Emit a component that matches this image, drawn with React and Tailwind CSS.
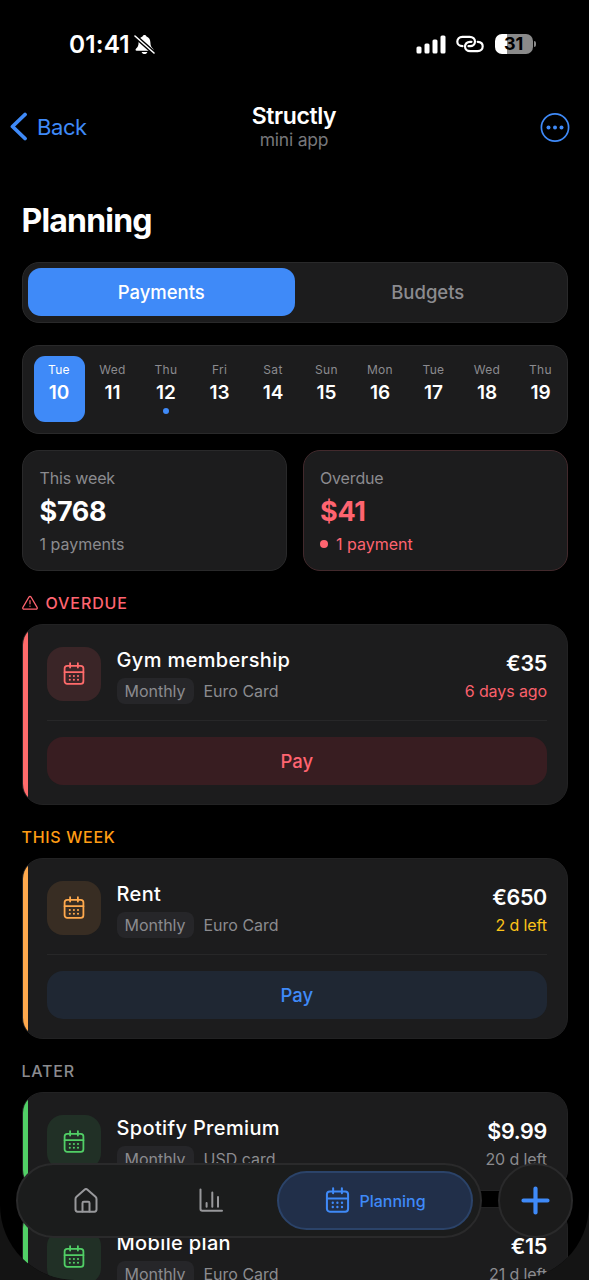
import React from "react";

const days = [
    { day: "Tue", date: 10, active: true },
    { day: "Wed", date: 11 },
    { day: "Thu", date: 12, dot: true },
    { day: "Fri", date: 13 },
    { day: "Sat", date: 14 },
    { day: "Sun", date: 15 },
    { day: "Mon", date: 16 },
    { day: "Tue", date: 17 },
    { day: "Wed", date: 18 },
    { day: "Thu", date: 19 },
];

const tones = {
    red: {
        bar: "bg-[#ff6b6b]",
        icon: "bg-[#3a2527] text-[#ff6b6b]",
        due: "text-[#f9606c]",
        pay: "bg-[#381d21] text-[#ff6470]",
    },
    orange: {
        bar: "bg-[#ffa94d]",
        icon: "bg-[#382d23] text-[#ffa94d]",
        due: "text-[#fcc419]",
        pay: "bg-[#1f2733] text-[#3f8af8]",
    },
    green: {
        bar: "bg-[#51cf66]",
        icon: "bg-[#213026] text-[#51cf66]",
        due: "text-[#8b8b8f]",
        pay: "",
    },
};

const CalendarIcon = ({ className }) => (
    <svg className={className} viewBox="0 0 24 24" fill="none" stroke="currentColor" strokeWidth="1.8" strokeLinecap="round">
        <rect x="2.6" y="3.9" width="18.8" height="18" rx="2.6" />
        <path d="M8.1 1.2v4.4M15.9 1.2v4.4M2.6 10.2h18.8" />
        <path d="M7.8 14h.01M11.9 14h.01M16 14h.01M7.8 17.8h.01M11.9 17.8h.01M16 17.8h.01" strokeWidth="2.1" />
    </svg>
);

const StatusBar = () => (
    <div className="flex h-[88px] items-center justify-between pl-[69px] pr-[53px]">
        <div className="flex items-center gap-[3px]">
            <span className="w-[62px] text-[24.5px] leading-none font-semibold tracking-[0.1px] whitespace-nowrap">01:41</span>
            <svg className="h-[21px] w-[21px]" viewBox="0 0 21 21">
                <path d="M10.5 1c-1 0-1.8.6-2 1.5C5.8 3.5 4.7 5.7 4.6 8.5c0 3.2-.9 4.700-2.600 6.200-.9.9-.5 2 .6 2h15.800c1.100 0 1.500-1.100.6-2-1.700-1.500-2.600-3-2.600-6.200-.1-2.800-1.200-5-3.900-6C12.300 1.600 11.500 1 10.500 1z" fill="white" />
                <path d="M7.6 17.9h5.8c-.5 1.400-1.600 2.100-2.900 2.100s-2.400-.7-2.900-2.100z" fill="white" />
                <path d="M1 2l19 17" stroke="black" strokeWidth="4.2" />
                <path d="M1 2l19 17" stroke="white" strokeWidth="1.6" strokeLinecap="round" />
            </svg>
        </div>
        <div className="flex items-center">
            <svg className="h-[19px] w-[30px]" viewBox="0 0 30 19" fill="white">
                <rect x="0.5" y="11.5" width="5" height="7" rx="1.5" />
                <rect x="8.5" y="8.5" width="5" height="10" rx="1.5" />
                <rect x="16.5" y="4.5" width="5" height="14" rx="1.5" />
                <rect x="24.5" y="0.5" width="5" height="18" rx="1.5" />
            </svg>
            <svg className="ml-[10px] h-[18px] w-[28px]" viewBox="0 0 28 18" fill="none" stroke="white" strokeWidth="2.2" strokeLinecap="round">
                <path d="M6.5 11.200C3.300 11 1.300 9 1.300 6.700c0-2.700 2-4.900 5-4.900h7.400c3 0 5.300 2 5.300 4.700s-2.200 4.700-4.900 4.700h-1.600" />
                <path d="M21.700 6.800c3.100.2 5 2.200 5 4.500 0 2.700-2 4.900-5 4.900h-7.400c-3 0-5.300-2-5.300-4.700s2.200-4.700 4.900-4.700h1.600" />
            </svg>
            <div className="ml-[11px] flex h-5 w-[38px] items-center justify-center rounded-[7px] bg-linear-to-r from-white from-31% to-[#8a8a8a] to-31%">
                <span className="text-[18px] leading-none font-bold tracking-[-0.3px] text-black">31</span>
            </div>
            <div className="ml-[1.5px] h-[6px] w-[2px] rounded-r-full bg-[#8a8a8a]" />
        </div>
    </div>
);

const Header = () => (
    <header className="grid h-[78px] grid-cols-3 items-center pr-[19px] pl-[10px]">
        <div className="flex items-center gap-[9px] text-[#3f8af8]">
            <svg className="h-[30px] w-[18px]" viewBox="0 0 18 30" fill="none" stroke="currentColor" strokeWidth="3.8" strokeLinecap="round" strokeLinejoin="round">
                <path d="M15 2.500L2.500 14.500l12.500 12" />
            </svg>
            <span className="-mt-[1px] text-[22px] leading-none tracking-[-0.4px]">Back</span>
        </div>
        <div className="pl-[8px] text-center">
            <h2 className="text-[23px] leading-[26px] font-semibold tracking-[-0.4px]">Structly</h2>
            <p className="text-[17.5px] leading-[22px] tracking-[-0.2px] text-[#77777b]">mini app</p>
        </div>
        <div className="flex justify-end">
            <svg className="h-[30px] w-[30px] text-[#3f8af8]" viewBox="0 0 30 30" fill="currentColor">
                <circle cx="15" cy="15.500" r="13.600" fill="none" stroke="currentColor" strokeWidth="1.700" />
                <circle cx="8.500" cy="15.500" r="2" />
                <circle cx="15" cy="15.500" r="2" />
                <circle cx="21.500" cy="15.500" r="2" />
            </svg>
        </div>
    </header>
);

const PaymentCard = ({ tone, name, card, amount, due, pay }) => {
    const t = tones[tone];
    return (
        <div className="flex overflow-hidden rounded-[21px] border border-[#222223] bg-[#1c1c1d]">
            <div className={`w-[5.5px] shrink-0 ${t.bar}`} />
            <div className="flex-1 pt-[21.5px] pr-[19.5px] pb-[18.5px] pl-[18.5px]">
                <div className="flex h-[57px] items-start">
                    <div className={`flex size-[54px] shrink-0 items-center justify-center rounded-2xl ${t.icon}`}>
                        <CalendarIcon className="size-6" />
                    </div>
                    <div className="ml-4 flex-1">
                        <h3 className="text-[20px] leading-[27px] font-medium tracking-[0.35px]">{name}</h3>
                        <div className="mt-[4.5px] flex items-center gap-[10px] text-[16px] leading-[26px] text-[#8b8b8f]">
                            <span className="flex h-[26px] w-[77px] justify-center rounded-[8px] bg-[#262629]">Monthly</span>
                            <span>{card}</span>
                        </div>
                    </div>
                    <div className="text-right">
                        <p className="pt-[2px] text-[21.5px] leading-[29px] font-semibold tracking-[-0.3px]">{amount}</p>
                        <p className={`mt-[0.5px] text-[16px] leading-[26px] tracking-[-0.1px] ${t.due}`}>{due}</p>
                    </div>
                </div>
                {pay && (
                    <div className="mt-[16.5px] border-t border-[#272728] pt-[16px]">
                        <button className={`h-12 w-full rounded-2xl pt-[2px] text-[18.5px] font-medium ${t.pay}`}>Pay</button>
                    </div>
                )}
            </div>
        </div>
    );
};

const TabBar = () => (
    <nav className="absolute inset-x-4 bottom-[42px] flex h-[75px] gap-4">
        <div className="flex w-[466px] items-center rounded-full border-2 border-[#2a2a2b] bg-[#1b1c1c] pr-[7px] pl-[5px] text-[#98989b]">
            <button className="flex w-[125px] justify-center">
                <svg className="size-[26px]" viewBox="0 0 26 26" fill="none" stroke="currentColor" strokeWidth="2" strokeLinecap="round" strokeLinejoin="round">
                    <path d="M2.500 11c0-1 .3-1.600 1-2.200l8-7.100c.9-.8 2.100-.8 3 0l8 7.100c.7.6 1 1.200 1 2.200v10.600c0 1.300-.8 2.100-2.100 2.100H4.600c-1.300 0-2.100-.8-2.100-2.100z" />
                    <path d="M9.500 23.500V15c0-.8.500-1.300 1.300-1.300h4.400c.8 0 1.300.5 1.300 1.300v8.500" />
                </svg>
            </button>
            <button className="flex w-[125px] justify-center">
                <svg className="size-[26px]" viewBox="0 0 26 26" fill="none" stroke="currentColor" strokeWidth="2" strokeLinecap="round" strokeLinejoin="round">
                    <path d="M2.500 1.500V21c0 1.200.6 1.800 1.800 1.800H24M8.600 15v3.800M14.300 4.500v14.300M20 9v9.800" />
                </svg>
            </button>
            <button className="ml-auto flex h-[59px] w-[196px] items-center justify-center gap-[8px] rounded-full border-2 border-[#2b4369] bg-[#212f49] text-[#3f8af8]">
                <CalendarIcon className="size-[27px]" />
                <span className="text-[16px] font-medium">Planning</span>
            </button>
        </div>
        <button className="flex size-[75px] items-center justify-center rounded-full border-2 border-[#2a2a2b] bg-[#1b1b1b]">
            <svg className="size-[30px]" viewBox="0 0 30 30" stroke="#3f8af8" strokeWidth="4.200" strokeLinecap="round">
                <path d="M14.500 2.500v24M2.500 14.500h24" />
            </svg>
        </button>
    </nav>
);

const App = () => {
    return (
        <div className="h-[1280px] w-[589px] overflow-hidden bg-[#141414] font-['Inter',sans-serif] text-white">
            <div className="relative h-full overflow-hidden rounded-b-[75px] bg-black">
                <StatusBar />
                <Header />

                <main className="px-[21.5px]">
                    <h1 className="mt-[34px] h-[61.5px] text-[32px] leading-[41px] font-bold tracking-[-0.8px]">Planning</h1>

                    {/* Payments / Budgets switch */}
                    <div className="flex h-[61px] rounded-[17px] border border-[#29292a] bg-[#1c1c1d] p-[5.5px] text-[18.5px] font-medium">
                        <button className="flex-1 rounded-[13px] bg-[#3f8af8] pt-[2px]">Payments</button>
                        <button className="flex-1 pt-[2px] text-[#8b8b8f]">Budgets</button>
                    </div>

                    {/* Days strip */}
                    <div className="mt-[22px] flex h-[89px] gap-[2.5px] overflow-hidden rounded-[17px] border border-[#29292a] bg-[#1c1c1d] pt-[10.5px] pl-[11px]">
                        {days.map((d) => (
                            <div
                                key={d.date}
                                className={`flex h-[66px] w-[51px] shrink-0 flex-col items-center rounded-[11px] pt-[5px] ${d.active ? "bg-[#3f8af8]" : ""}`}
                            >
                                <span className={`text-[12px] leading-[18px] tracking-[0.3px] ${d.active ? "text-white" : "text-[#8b8b8f]"}`}>{d.day}</span>
                                <span className="mt-[1px] text-[19px] leading-[26px] font-semibold">{d.date}</span>
                                {d.dot && <span className="mt-[2px] size-[6px] rounded-full bg-[#3f8af8]" />}
                            </div>
                        ))}
                    </div>

                    {/* Totals */}
                    <div className="mt-4 grid grid-cols-2 gap-4 text-[16px]">
                        <div className="h-[121px] rounded-[17px] border border-[#29292a] bg-[#1c1c1d] px-[17px] pt-[15.5px]">
                            <p className="leading-[24px] tracking-[-0.15px] text-[#8b8b8f]">This week</p>
                            <p className="mt-[4px] text-[27px] leading-[36px] font-bold tracking-[-0.3px]">$768</p>
                            <p className="mt-[2px] leading-[24px] text-[#8b8b8f]">1 payments</p>
                        </div>
                        <div className="h-[121px] rounded-[17px] border border-[#42292c] bg-[#1c1c1d] px-[16.5px] pt-[15.5px]">
                            <p className="leading-[24px] tracking-[-0.15px] text-[#8b8b8f]">Overdue</p>
                            <p className="mt-[4px] text-[27px] leading-[36px] font-bold tracking-[-0.3px] text-[#ff6470]">$41</p>
                            <p className="mt-[2px] flex items-center gap-2 leading-[24px] text-[#ff6470]">
                                <span className="size-2 rounded-full bg-[#ff6470]" />
                                1 payment
                            </p>
                        </div>
                    </div>

                    <h4 className="mt-[21.5px] flex items-center gap-[8px] text-[16px] leading-[22px] font-medium tracking-[0.9px] text-[#ff6470]">
                        <svg className="size-4" viewBox="0 0 16 16" fill="none" stroke="currentColor" strokeWidth="1.2" strokeLinecap="round" strokeLinejoin="round">
                            <path d="M6.900 2.100.900 12.400c-.5.900.1 1.800 1.100 1.800h12c1 0 1.600-.9 1.100-1.800L9.100 2.100c-.5-.9-1.700-.9-2.200 0zM8 5.600v3.200M8 11.200v.1" />
                        </svg>
                        OVERDUE
                    </h4>
                    <div className="mt-[10px]">
                        <PaymentCard tone="red" name="Gym membership" card="Euro Card" amount="€35" due="6 days ago" pay />
                    </div>

                    <h4 className="mt-[21.5px] text-[16px] leading-[22px] font-medium tracking-[0.7px] text-[#ff9d14]">THIS WEEK</h4>
                    <div className="mt-[10px]">
                        <PaymentCard tone="orange" name="Rent" card="Euro Card" amount="€650" due="2 d left" pay />
                    </div>

                    <h4 className="mt-[21.5px] text-[16px] leading-[22px] font-medium tracking-[0.8px] text-[#8b8b8f]">LATER</h4>
                    <div className="mt-[10px] flex flex-col gap-4">
                        <PaymentCard tone="green" name="Spotify Premium" card="USD card" amount="$9.99" due="20 d left" />
                        <PaymentCard tone="green" name="Mobile plan" card="Euro Card" amount="€15" due="21 d left" />
                    </div>
                </main>

                <TabBar />
            </div>
        </div>
    );
};

export default App;
